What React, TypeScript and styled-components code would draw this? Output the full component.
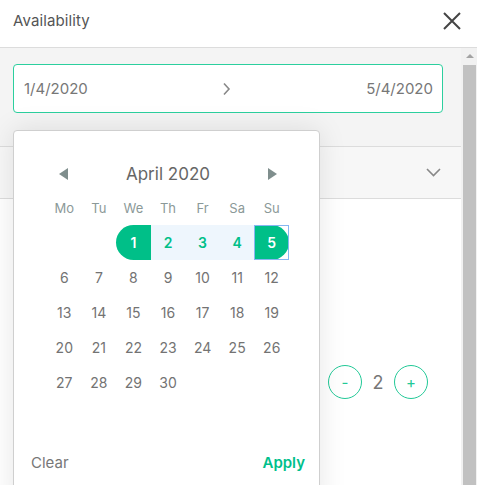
import React from "react";
import styled, { createGlobalStyle, css } from "styled-components";

const GlobalStyle = createGlobalStyle`
  html, body { margin: 0; padding: 0; background: #fff; }
  body { font-family: Inter, "Noto Sans", sans-serif; }
  * { box-sizing: border-box; }
`;

const Modal = styled.div`
  width: 477px;
  height: 485px;
  overflow: hidden;
  display: flex;
  flex-direction: column;
  background: #fff;
`;

const Header = styled.div`
  height: 48px;
  flex: none;
  display: flex;
  align-items: center;
  justify-content: space-between;
  padding: 0 16px 6px 13px;
  border-bottom: 1px solid #dcdcdc;
`;

const Title = styled.div`
  font-size: 15px;
  color: #555;
  letter-spacing: 0.1px;
`;

const CloseButton = styled.button`
  border: none;
  background: none;
  padding: 0;
  width: 18px;
  height: 18px;
  display: flex;
  color: #444;
`;

const Body = styled.div`
  flex: 1;
  display: flex;
  min-height: 0;
`;

const Content = styled.div`
  flex: 1;
  position: relative;
  display: flex;
  flex-direction: column;
`;

const DateSection = styled.div`
  background: #f4f4f4;
  padding: 16px 18px 33px 13px;
`;

const RangeInput = styled.div`
  height: 49px;
  border: 1px solid #2ccf9e;
  border-radius: 4px;
  background: #fff;
  display: flex;
  align-items: center;
  justify-content: space-between;
  padding: 0 9px 0 10px;
  font-size: 15px;
  color: #777;
`;

const Arrow = styled.span`
  display: flex;
  color: #888;
`;

const SelectRow = styled.div`
  height: 53px;
  background: #f7f7f7;
  border-top: 1px solid #dcdcdc;
  border-bottom: 1px solid #dcdcdc;
  display: flex;
  align-items: center;
  justify-content: flex-end;
  padding-right: 20px;
  color: #888;
`;

const Lower = styled.div`
  flex: 1;
  background: #fff;
  display: flex;
  flex-direction: column;
  align-items: flex-end;
  padding: 166px 33px 0 0;
`;

const Counter = styled.div`
  display: flex;
  align-items: center;
`;

const RoundButton = styled.button`
  width: 34px;
  height: 34px;
  border-radius: 50%;
  border: 1px solid #22c997;
  background: #fff;
  color: #22c997;
  font-family: inherit;
  font-size: 15px;
  padding: 0;
  display: flex;
  align-items: center;
  justify-content: center;
`;

const Count = styled.span`
  width: 32px;
  text-align: center;
  font-size: 18px;
  color: #777;
`;

const Popup = styled.div`
  position: absolute;
  left: 13px;
  top: 82px;
  width: 307px;
  height: 380px;
  background: #fff;
  border: 1px solid #cfcfcf;
  border-radius: 4px;
  box-shadow: 0 0 28px rgba(0, 0, 0, 0.1);
  padding: 26px 0 0 33px;
  display: flex;
  flex-direction: column;
`;

const MonthBar = styled.div`
  width: 242px;
  height: 34px;
  display: flex;
  align-items: center;
  justify-content: space-between;
  padding: 0 12px;
`;

const MonthTitle = styled.div`
  font-size: 17px;
  color: #666;
`;

const NavTriangle = styled.span<{ $dir: "left" | "right" }>`
  width: 0;
  height: 0;
  border-top: 6px solid transparent;
  border-bottom: 6px solid transparent;
  ${({ $dir }) =>
    $dir === "left"
      ? css`border-right: 9px solid #7f8e8d;`
      : css`border-left: 9px solid #7f8e8d;`}
`;

const Grid = styled.div`
  width: 242px;
  display: grid;
  grid-template-columns: repeat(7, 1fr);
`;

const WeekDay = styled.div`
  height: 34px;
  display: flex;
  align-items: center;
  justify-content: center;
  font-size: 13px;
  color: #8b9998;
`;

type DayKind = "none" | "start" | "range" | "end";

const Day = styled.div<{ $kind: DayKind; $focus?: boolean }>`
  position: relative;
  height: 35px;
  display: flex;
  align-items: center;
  justify-content: center;
  font-size: 14px;
  color: #737373;
  ${({ $kind }) =>
    $kind === "start" &&
    css`
      background: #00bf88;
      color: #fff;
      font-weight: 600;
      border-radius: 17.5px 0 0 17.5px;
    `}
  ${({ $kind }) =>
    $kind === "end" &&
    css`
      background: #00bf88;
      color: #fff;
      font-weight: 600;
      border-radius: 0 17.5px 17.5px 0;
    `}
  ${({ $kind }) =>
    $kind === "range" &&
    css`
      background: #eef6fd;
      color: #00bf88;
      font-weight: 600;
    `}
  ${({ $focus }) =>
    $focus &&
    css`
      &::after {
        content: "";
        position: absolute;
        inset: 0;
        border: 1px solid #86b6f2;
      }
    `}
`;

const Footer = styled.div`
  margin-top: 50px;
  width: 274px;
  margin-left: -16px;
  display: flex;
  justify-content: space-between;
  align-items: center;
  height: 24px;
  font-size: 15px;
`;

const ClearButton = styled.span`
  color: #777;
`;

const ApplyButton = styled.span`
  color: #00c08b;
  font-weight: 600;
`;

const Scrollbar = styled.div`
  width: 16px;
  flex: none;
  background: #f1f1f1;
  display: flex;
  flex-direction: column;
  align-items: center;
  padding: 6px 1px 0 2px;
`;

const ScrollArrow = styled.span`
  width: 0;
  height: 0;
  border-left: 4px solid transparent;
  border-right: 4px solid transparent;
  border-bottom: 4px solid #a3a3a3;
  margin-bottom: 7px;
`;

const Thumb = styled.div`
  flex: 1;
  width: 100%;
  background: #c1c1c1;
`;

const weekDays = ["Mo", "Tu", "We", "Th", "Fr", "Sa", "Su"];

function kindOf(d: number): DayKind {
  if (d === 1) return "start";
  if (d === 5) return "end";
  if (d > 1 && d < 5) return "range";
  return "none";
}

export default function App() {
  const cells: (number | null)[] = [null, null];
  for (let d = 1; d <= 30; d++) cells.push(d);

  return (
    <>
      <GlobalStyle />
      <Modal>
        <Header>
          <Title>Availability</Title>
          <CloseButton aria-label="Close">
            <svg width="18" height="18" viewBox="0 0 18 18">
              <path d="M1 1 L17 17 M17 1 L1 17" stroke="currentColor" strokeWidth="2" fill="none" />
            </svg>
          </CloseButton>
        </Header>
        <Body>
          <Content>
            <DateSection>
              <RangeInput>
                <span>1/4/2020</span>
                <Arrow>
                  <svg width="9" height="14" viewBox="0 0 9 14">
                    <path d="M2 1.5 L7 7 L2 12.5" stroke="currentColor" strokeWidth="1.6" fill="none" />
                  </svg>
                </Arrow>
                <span>5/4/2020</span>
              </RangeInput>
            </DateSection>
            <SelectRow>
              <svg width="15" height="9" viewBox="0 0 15 9">
                <path d="M1 1 L7.5 7.5 L14 1" stroke="currentColor" strokeWidth="1.6" fill="none" />
              </svg>
            </SelectRow>
            <Lower>
              <Counter>
                <RoundButton>-</RoundButton>
                <Count>2</Count>
                <RoundButton>+</RoundButton>
              </Counter>
            </Lower>
            <Popup>
              <MonthBar>
                <NavTriangle $dir="left" />
                <MonthTitle>April 2020</MonthTitle>
                <NavTriangle $dir="right" />
              </MonthBar>
              <Grid>
                {weekDays.map((w) => (
                  <WeekDay key={w}>{w}</WeekDay>
                ))}
                {cells.map((d, i) =>
                  d === null ? (
                    <Day key={"e" + i} $kind="none" />
                  ) : (
                    <Day key={d} $kind={kindOf(d)} $focus={d === 5}>
                      {d}
                    </Day>
                  )
                )}
              </Grid>
              <Footer>
                <ClearButton>Clear</ClearButton>
                <ApplyButton>Apply</ApplyButton>
              </Footer>
            </Popup>
          </Content>
          <Scrollbar>
            <ScrollArrow />
            <Thumb />
          </Scrollbar>
        </Body>
      </Modal>
    </>
  );
}
